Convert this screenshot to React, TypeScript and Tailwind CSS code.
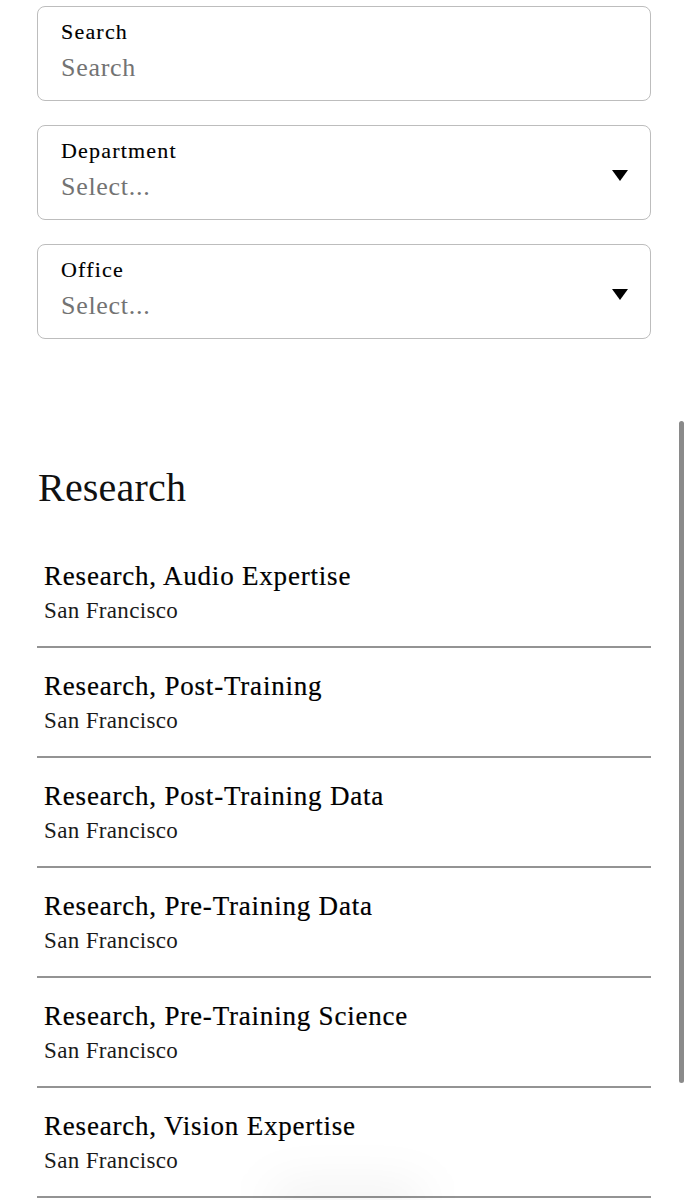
const serif = "font-['Liberation_Serif','Times_New_Roman',serif]";

const jobs = [
  "Research, Audio Expertise",
  "Research, Post-Training",
  "Research, Post-Training Data",
  "Research, Pre-Training Data",
  "Research, Pre-Training Science",
  "Research, Vision Expertise",
];

const Caret = () => (
  <svg width="16" height="11" viewBox="0 0 16 11" className="shrink-0 translate-y-[3px]">
    <polygon points="0,0 16,0 8,11" fill="#000" />
  </svg>
);

const Field = ({ label, placeholder, select }: { label: string; placeholder: string; select?: boolean }) => (
  <div className="h-[95px] border-[1.5px] border-[#bdbdbd] rounded-[8px] flex items-start justify-between pl-[23px] pr-[22px]">
    <div className="pt-[11px]">
      <div className="text-[22px] leading-[28px] tracking-[1.2px] text-black [-webkit-text-stroke:0.15px_#000]">
        {label}
      </div>
      <div className="mt-[6px] text-[26px] leading-[32px] tracking-[0.7px] text-[#737373]">{placeholder}</div>
    </div>
    {select && (
      <div className="h-full flex items-center">
        <Caret />
      </div>
    )}
  </div>
);

export default function App() {
  return (
    <div className={`relative min-h-[1200px] bg-white overflow-hidden ${serif}`}>
      <div className="mx-[37px] pt-[6px]">
        {/* Filters */}
        <div className="flex flex-col gap-[24px]">
          <Field label="Search" placeholder="Search" />
          <Field label="Department" placeholder="Select..." select />
          <Field label="Office" placeholder="Select..." select />
        </div>

        {/* Department section */}
        <h2 className="mt-[125px] ml-px text-[40px] leading-[48px] tracking-[0.2px] text-[#111]">Research</h2>

        <ul className="mt-[26px]">
          {jobs.map((job) => (
            <li key={job} className="pt-[21px] pb-[21px] pl-[7px] border-b-[2px] border-[#939393]">
              <div className="text-[27px] leading-[34px] tracking-[0.8px] text-black [-webkit-text-stroke:0.2px_#000]">
                {job}
              </div>
              <div className="mt-[4px] text-[23px] leading-[28px] tracking-[0.35px] text-[#1a1a1a]">
                San Francisco
              </div>
            </li>
          ))}
        </ul>
      </div>

      {/* overlay scroll indicator */}
      <div className="absolute left-[679px] top-[421px] w-[4.5px] h-[662px] rounded-full bg-[#8a8a8a]" />

      {/* floating shadow at the bottom */}
      <div className="absolute left-[270px] top-[1186px] w-[155px] h-[36px] rounded-full bg-black/[0.06] blur-xl" />
    </div>
  );
}
